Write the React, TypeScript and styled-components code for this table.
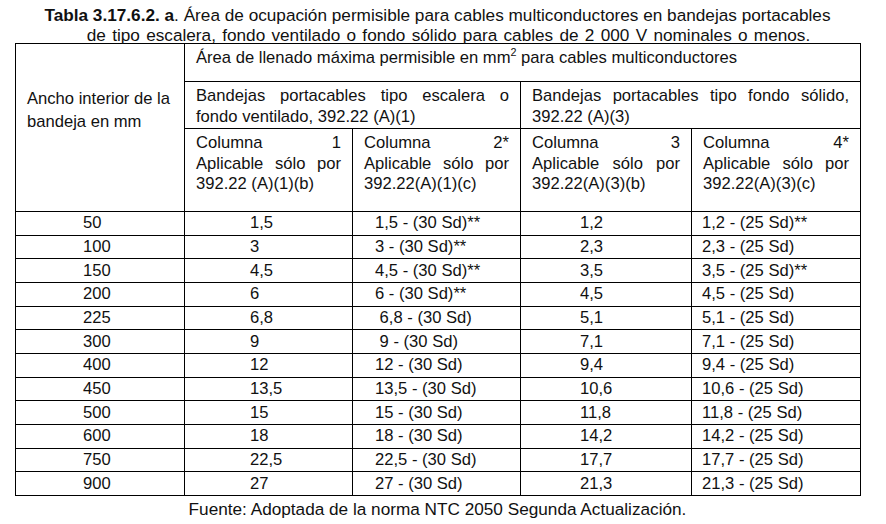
import React from 'react';
import styled, { createGlobalStyle } from 'styled-components';

const GlobalStyle = createGlobalStyle`
  html, body {
    margin: 0;
    padding: 0;
    background: #fff;
  }
  body {
    font-family: "Liberation Sans", Arial, sans-serif;
    color: #111;
  }
`;

const Page = styled.div`
  width: 886px;
  height: 524px;
  padding: 5px 0 0 15px;
  box-sizing: border-box;
  font-size: 16.6px;
`;

const Caption = styled.div`
  width: 845px;
  text-align: center;
  line-height: 20px;
  height: 38px;
  font-size: 17.2px;
`;

const CaptionLine = styled.div<{ $shift?: number; $spread?: number }>`
  padding-left: ${({ $shift }) => ($shift ? $shift * 2 : 0)}px;
  word-spacing: ${({ $spread }) => $spread ?? 0}px;
  white-space: nowrap;
`;

const Table = styled.table`
  border-collapse: collapse;
  table-layout: fixed;
  width: 845px;
  border: 1px solid #000;
`;

const Cell = styled.td`
  border: 1px solid #000;
  padding: 0 11px;
  vertical-align: top;
  line-height: 20.5px;
  white-space: nowrap;
  overflow: hidden;
`;

const HeadRow = styled.tr<{ $h: number }>`
  height: ${({ $h }) => $h}px;
`;

const TopCell = styled(Cell)`
  padding-top: 4px;
`;

const SideCell = styled(Cell)`
  padding-top: 43px;
  line-height: 23px;
`;

const Justified = styled.div`
  text-align: justify;
  text-align-last: justify;
`;

const Plain = styled.div`
  text-align: left;
`;

const Sup = styled.sup`
  font-size: 0.65em;
  line-height: 0;
`;

const BodyRow = styled.tr`
  height: 23.67px;
`;

const Value = styled.td<{ $indent: number }>`
  border-left: 1px solid #000;
  border-right: 1px solid #000;
  border-top: 1px solid #000;
  padding: 0 0 0 ${({ $indent }) => $indent}px;
  line-height: 18px;
  white-space: pre;
  vertical-align: middle;
`;

const Source = styled.div`
  width: 845px;
  text-align: center;
  margin-top: 3px;
  font-size: 17.2px;
`;

const rows: string[][] = [
  ['50', '1,5', '1,5 - (30 Sd)**', '1,2', '1,2 - (25 Sd)**'],
  ['100', '3', '3 - (30 Sd)**', '2,3', '2,3 - (25 Sd)'],
  ['150', '4,5', '4,5 - (30 Sd)**', '3,5', '3,5 - (25 Sd)**'],
  ['200', '6', '6 - (30 Sd)**', '4,5', '4,5 - (25 Sd)'],
  ['225', '6,8', ' 6,8 - (30 Sd)', '5,1', '5,1 - (25 Sd)'],
  ['300', '9', ' 9 - (30 Sd)', '7,1', '7,1 - (25 Sd)'],
  ['400', '12', '12 - (30 Sd)', '9,4', '9,4 - (25 Sd)'],
  ['450', '13,5', '13,5 - (30 Sd)', '10,6', '10,6 - (25 Sd)'],
  ['500', '15', '15 - (30 Sd)', '11,8', '11,8 - (25 Sd)'],
  ['600', '18', '18 - (30 Sd)', '14,2', '14,2 - (25 Sd)'],
  ['750', '22,5', '22,5 - (30 Sd)', '17,7', '17,7 - (25 Sd)'],
  ['900', '27', '27 - (30 Sd)', '21,3', '21,3 - (25 Sd)'],
];

const indents = [67, 65, 22, 59, 10];
const widths = [169, 168, 168, 171, 169];

const columns = [
  { n: '1', ref: '392.22 (A)(1)(b)' },
  { n: '2*', ref: '392.22(A)(1)(c)' },
  { n: '3', ref: '392.22(A)(3)(b)' },
  { n: '4*', ref: '392.22(A)(3)(c)' },
];

const App = () => {
  return (
    <Page>
      <GlobalStyle />
      <Caption>
        <CaptionLine>
          <b>Tabla 3.17.6.2. a</b>. Área de ocupación permisible para cables multiconductores en bandejas portacables
        </CaptionLine>
        <CaptionLine $shift={11} $spread={1.5}>
          de tipo escalera, fondo ventilado o fondo sólido para cables de 2 000 V nominales o menos.
        </CaptionLine>
      </Caption>
      <Table>
        <colgroup>
          {widths.map((w, i) => (
            <col key={i} style={{ width: w }} />
          ))}
        </colgroup>
        <tbody>
          <HeadRow $h={38}>
            <SideCell rowSpan={3}>
              Ancho interior de la
              <br />
              bandeja en mm
            </SideCell>
            <TopCell colSpan={4}>
              Área de llenado máxima permisible en mm<Sup>2</Sup> para cables multiconductores
            </TopCell>
          </HeadRow>
          <HeadRow $h={47}>
            <TopCell colSpan={2}>
              <Justified>Bandejas portacables tipo escalera o</Justified>
              <Plain>fondo ventilado, 392.22 (A)(1)</Plain>
            </TopCell>
            <TopCell colSpan={2}>
              <Justified>Bandejas portacables tipo fondo sólido,</Justified>
              <Plain>392.22 (A)(3)</Plain>
            </TopCell>
          </HeadRow>
          <HeadRow $h={83}>
            {columns.map((c) => (
              <TopCell key={c.n}>
                <Justified>Columna {c.n}</Justified>
                <Justified>Aplicable sólo por</Justified>
                <Plain>{c.ref}</Plain>
              </TopCell>
            ))}
          </HeadRow>
          {rows.map((r) => (
            <BodyRow key={r[0]}>
              {r.map((v, i) => (
                <Value key={i} $indent={indents[i]}>
                  {v}
                </Value>
              ))}
            </BodyRow>
          ))}
        </tbody>
      </Table>
      <Source>Fuente: Adoptada de la norma NTC 2050 Segunda Actualización.</Source>
    </Page>
  );
};

export default App;
